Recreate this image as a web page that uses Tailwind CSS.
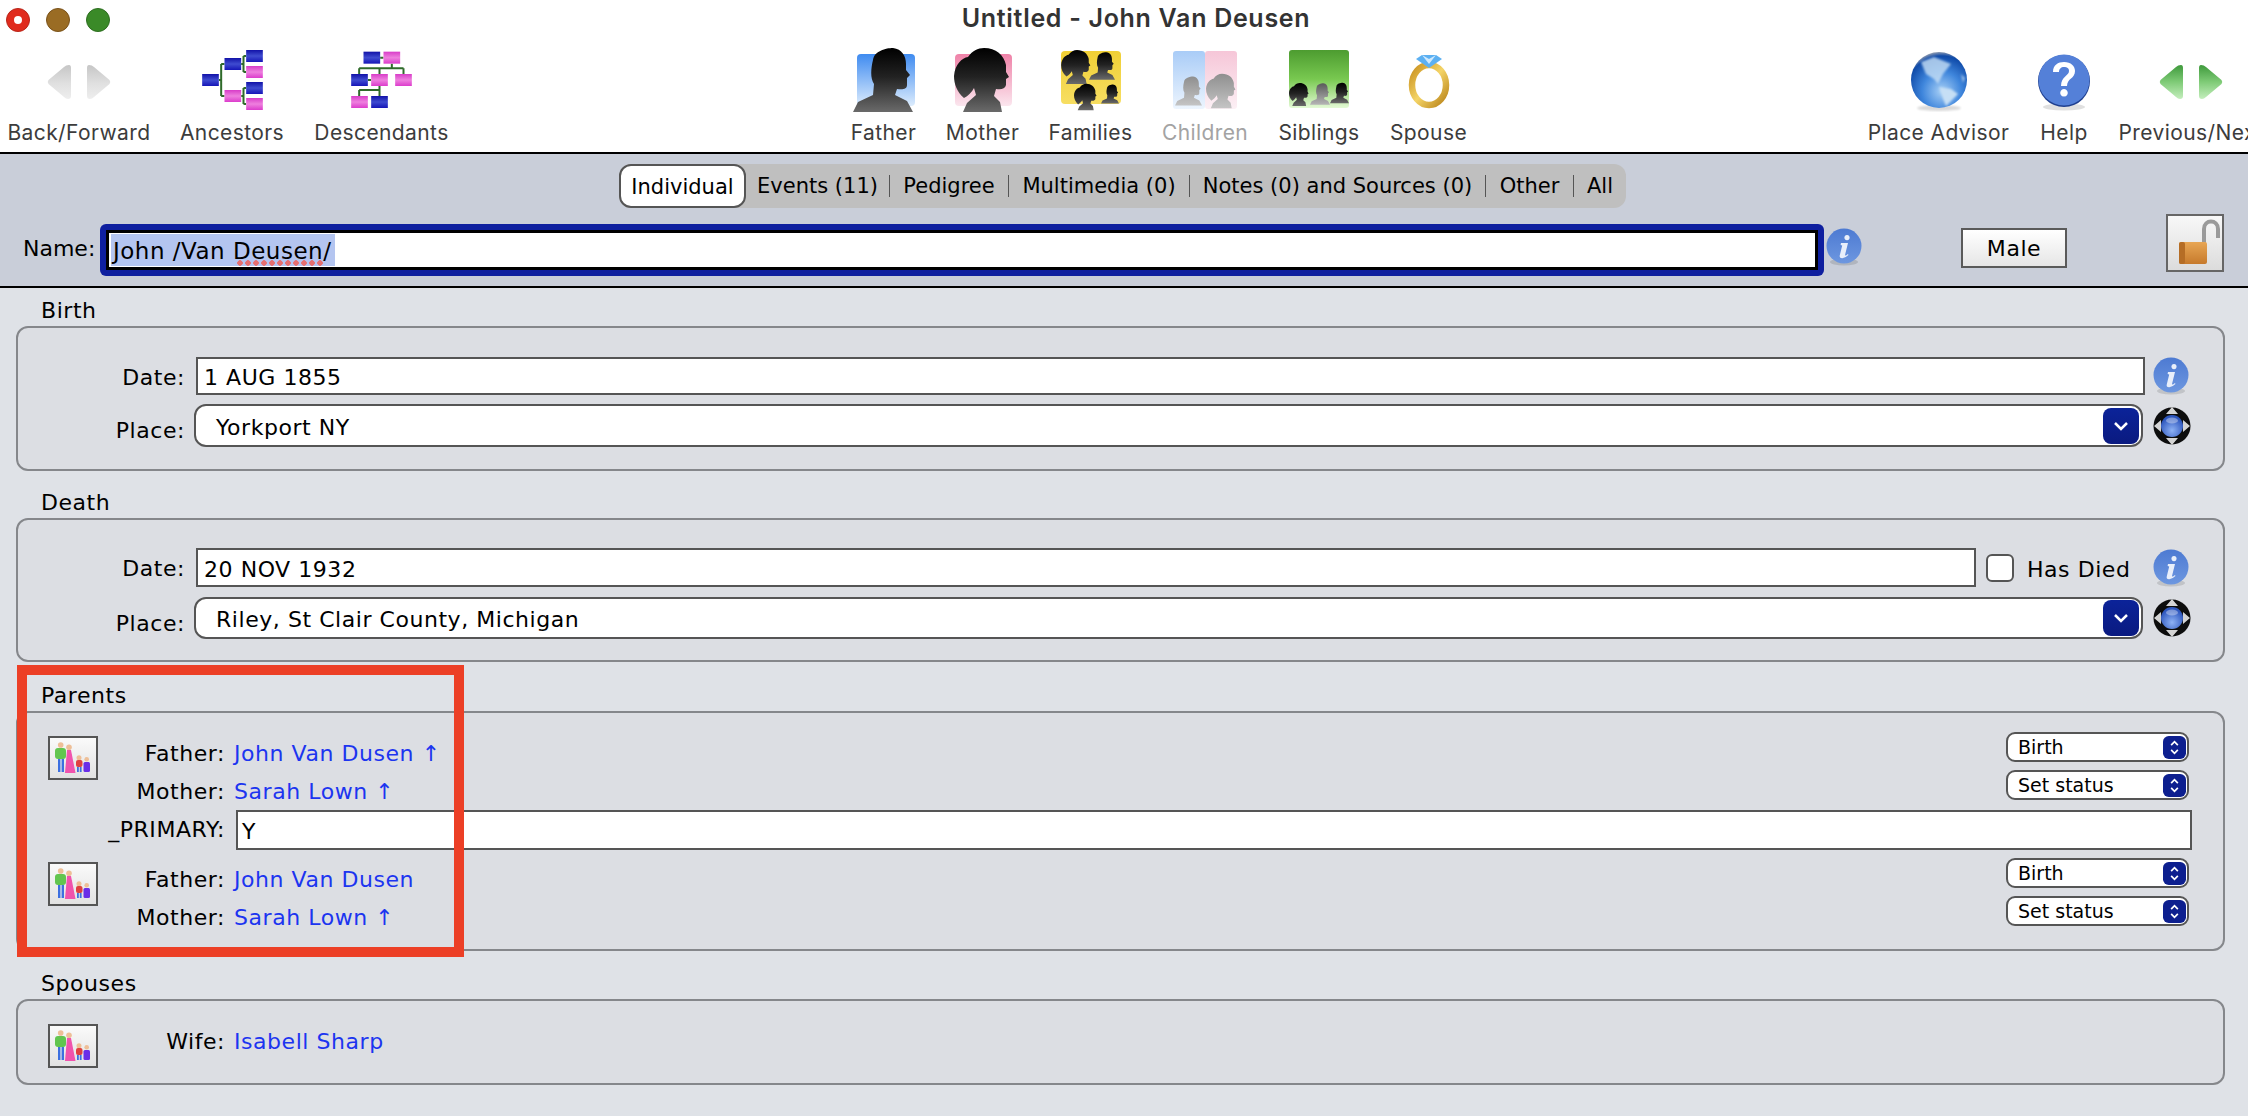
<!DOCTYPE html>
<html lang="en">
<head>
<meta charset="utf-8">
<title>Untitled - John Van Deusen</title>
<script src="https://cdn.jsdelivr.net/npm/@tailwindcss/browser@4"></script>
</head>
<body class="relative w-[2248px] h-[1116px] overflow-hidden bg-[#dfe2e7] font-['DejaVu_Sans',sans-serif] text-[22px] tracking-[0.55px] text-black">
<svg class="absolute w-0 h-0" aria-hidden="true">
  <defs>
    <linearGradient id="sil" x1="0" y1="0" x2="0" y2="1"><stop offset="0" stop-color="#000"/><stop offset="0.45" stop-color="#222"/><stop offset="1" stop-color="#6a6a6a"/></linearGradient>
    <linearGradient id="sil2" x1="0" y1="0" x2="0" y2="1"><stop offset="0" stop-color="#8f8f8f"/><stop offset="1" stop-color="#c4c4c4"/></linearGradient>
    <linearGradient id="sil3" x1="0" y1="0" x2="0" y2="1"><stop offset="0" stop-color="#5a5a5a"/><stop offset="1" stop-color="#b5b5b5"/></linearGradient>
    <linearGradient id="blueb" x1="0" y1="0" x2="0" y2="1"><stop offset="0" stop-color="#3f8bf0"/><stop offset="1" stop-color="#dcecfd"/></linearGradient>
    <linearGradient id="pinkb" x1="0" y1="0" x2="0" y2="1"><stop offset="0" stop-color="#ef82a8"/><stop offset="1" stop-color="#fbe6ee"/></linearGradient>
    <linearGradient id="yelb" x1="0" y1="0" x2="0" y2="1"><stop offset="0" stop-color="#f0cf35"/><stop offset="1" stop-color="#f7de62"/></linearGradient>
    <linearGradient id="greenb" x1="0" y1="0" x2="0" y2="1"><stop offset="0" stop-color="#4d9c30"/><stop offset="0.5" stop-color="#78c850"/><stop offset="1" stop-color="#e4fad6"/></linearGradient>
    <linearGradient id="pblue" x1="0" y1="0" x2="0" y2="1"><stop offset="0" stop-color="#a9ccf7"/><stop offset="1" stop-color="#edf5fe"/></linearGradient>
    <linearGradient id="ppink" x1="0" y1="0" x2="0" y2="1"><stop offset="0" stop-color="#f6c6d8"/><stop offset="1" stop-color="#fcf0f5"/></linearGradient>
    <linearGradient id="arrg" x1="0" y1="0" x2="0" y2="1"><stop offset="0" stop-color="#c6c6c6"/><stop offset="0.55" stop-color="#e0e0e0"/><stop offset="1" stop-color="#eeeeee"/></linearGradient>
    <linearGradient id="arrn" x1="0" y1="0" x2="0" y2="1"><stop offset="0" stop-color="#3f9a3c"/><stop offset="0.5" stop-color="#7fcb77"/><stop offset="1" stop-color="#c4eebd"/></linearGradient>
    <linearGradient id="boxb" x1="0" y1="0" x2="0" y2="1"><stop offset="0" stop-color="#1212a8"/><stop offset="0.5" stop-color="#3f4cd0"/><stop offset="1" stop-color="#1616b8"/></linearGradient>
    <linearGradient id="boxp" x1="0" y1="0" x2="0" y2="1"><stop offset="0" stop-color="#d83cc8"/><stop offset="0.5" stop-color="#ee80de"/><stop offset="1" stop-color="#dc3ccc"/></linearGradient>
    <radialGradient id="globeg" cx="0.55" cy="0.7" r="0.7"><stop offset="0" stop-color="#a8d0f6"/><stop offset="0.5" stop-color="#3f86dc"/><stop offset="0.9" stop-color="#0f4aa8"/><stop offset="1" stop-color="#8a98b0"/></radialGradient>
    <linearGradient id="infog" x1="0" y1="0" x2="0" y2="1"><stop offset="0" stop-color="#4d7ad2"/><stop offset="1" stop-color="#6d97e0"/></linearGradient>
    <radialGradient id="ballg" cx="0.5" cy="0.7" r="0.6"><stop offset="0" stop-color="#8eb2f5"/><stop offset="1" stop-color="#2d56bd"/></radialGradient>
    <linearGradient id="gold" x1="0" y1="0" x2="1" y2="1"><stop offset="0" stop-color="#c8901e"/><stop offset="0.5" stop-color="#f4d467"/><stop offset="1" stop-color="#b98318"/></linearGradient>
    <linearGradient id="lockg" x1="0" y1="0" x2="0" y2="1"><stop offset="0" stop-color="#e8a654"/><stop offset="1" stop-color="#c67a2c"/></linearGradient>
    <filter id="soft"><feGaussianBlur stdDeviation="0.45"/></filter>
    <filter id="soft2"><feGaussianBlur stdDeviation="0.8"/></filter>
    <symbol id="male" viewBox="0 0 60 64"><path d="M20 12C21 3 33 0 40 0C49 1 53 8 53 16L53 22L57 27L54 30L54 37C54 41 50 42 44 41L42 47L54 53L60 64L0 64L5 54L20 47L21 36C17 30 18 20 20 12Z"/></symbol>
    <symbol id="female" viewBox="0 0 56 64"><path d="M30 0C42 0 50 7 52 17L52 24L55 29L52 31L52 37C51 41 47 42 42 41L40 48L46 54L48 64L9 64L13 55L22 47L20 40C18 44 14 48 10 50C3 44 0 36 0 28C1 16 8 10 14 9C18 3 24 0 30 0Z"/></symbol>
    <symbol id="arrow" viewBox="0 0 24 34"><path d="M22 0Q24 0 24 3V31Q24 34 21 34Q19 34 17 32L1.5 19Q0 17 1.5 15L17 2Q19 0 22 0Z"/></symbol>
    <symbol id="info" viewBox="0 0 36 38">
      <ellipse cx="18" cy="34" rx="14" ry="3.5" fill="#000" opacity="0.12"/>
      <circle cx="18" cy="18" r="17.5" fill="url(#infog)"/>
      <path d="M21 7a2.6 2.6 0 1 0 .01 0ZM15 15h7l-3 12q0 1.5 3-1l.4 1q-3.4 3.4-6.4 3.2-3 0-2.2-3l2.4-9.6-1.6-.5Z" fill="#e9effa"/>
    </symbol>
    <symbol id="move" viewBox="0 0 38 40">
      <g filter="url(#soft)">
        <circle cx="19" cy="20" r="18.500" fill="#0b0b0b"/>
        <path d="M19 1l6 7h-12ZM19 39l6-7h-12ZM1 20l7-6v12ZM37 20l-7-6v12Z" fill="#d4d4d4"/>
      </g>
      <circle cx="19" cy="20" r="11" fill="url(#ballg)"/>
      <ellipse cx="19" cy="14.500" rx="6" ry="3" fill="#fff" opacity="0.35"/>
    </symbol>
    <symbol id="family" viewBox="0 0 46 40">
      <g filter="url(#soft)">
        <rect x="5" y="10" width="11" height="11" rx="3" fill="#62c550"/>
        <circle cx="10.700" cy="7" r="2.800" fill="#eebf97"/><rect x="8" y="21" width="2.400" height="13" fill="#3e6fe0"/><rect x="11.600" y="21" width="2.400" height="13" fill="#3e6fe0"/>
        <circle cx="19" cy="9.300" r="2.800" fill="#eebf97"/><path d="M17 12h4l4.500 23H15Z" fill="#f052ad"/>
        <circle cx="29" cy="19.700" r="2.500" fill="#eebf97"/><rect x="26" y="22" width="6.500" height="7" rx="2" fill="#e0403f"/><rect x="27" y="29" width="1.800" height="5" fill="#3e6fe0"/><rect x="29.800" y="29" width="1.800" height="5" fill="#3e6fe0"/>
        <circle cx="36.700" cy="21.300" r="2.300" fill="#eebf97"/><rect x="33.500" y="24" width="6.500" height="10" rx="1.500" fill="#6a2ee8"/>
      </g>
    </symbol>
    <symbol id="updown" viewBox="0 0 24 24"><rect width="24" height="24" rx="6" fill="#0d1f8f"/><path d="M8.5 9.5L12 6l3.5 3.5M8.5 14.500L12 18l3.500-3.500" fill="none" stroke="#fff" stroke-width="1.800"/></symbol>
  </defs>
</svg>

<!-- Title bar and toolbar -->
<header class="h-[154px] bg-white border-b-2 border-black font-['Inter',sans-serif] text-[21px] tracking-[0.4px] text-[#3c3c3c] overflow-hidden">
  <div class="relative h-[48px] flex items-center justify-center">
    <div class="absolute left-[6px] top-[8px] flex gap-[16px]">
      <span class="w-[24px] h-[24px] rounded-full bg-[#e02b1d] border border-[#b8261a] flex items-center justify-center"><span class="w-[8px] h-[8px] rounded-full bg-white"></span></span>
      <span class="w-[24px] h-[24px] rounded-full bg-[#9a6c24] border border-[#7a521a]"></span>
      <span class="w-[24px] h-[24px] rounded-full bg-[#3a8a28] border border-[#2d6e20]"></span>
    </div>
    <h1 class="ml-[24px] -mt-[10px] text-[25px] font-semibold tracking-[0.7px] text-[#333]">Untitled - John Van Deusen</h1>
  </div>
  <div class="flex h-[104px] whitespace-nowrap">
    <div class="w-[851px] shrink-0 flex pl-[8px] gap-[30px]">
      <div class="w-[142px] flex flex-col items-center"><svg class="w-[64px] h-[64px] shrink-0" viewBox="0 0 64 64"><use href="#arrow" x="0" y="17" width="24" height="34" fill="url(#arrg)"/><use href="#arrow" transform="translate(64 0) scale(-1 1)" x="0" y="17" width="24" height="34" fill="url(#arrg)"/></svg><span class="leading-[42px]">Back/Forward</span></div>
      <div class="w-[104px] flex flex-col items-center">
        <svg class="w-[61px] h-[64px] shrink-0" viewBox="608 144 182 192">
          <path d="M658 240H665M665 192V288M665 192H675M665 288H675M725 192H732M732 168V216M732 168H740M732 216H740M725 288H732M732 264V312M732 264H740M732 312H740" stroke="#2f6b2a" stroke-width="6" fill="none"/>
          <rect x="608" y="222" width="50" height="36" fill="url(#boxb)"/><rect x="675" y="174" width="50" height="36" fill="url(#boxb)"/><rect x="675" y="270" width="50" height="36" fill="url(#boxp)"/>
          <rect x="740" y="150" width="50" height="36" fill="url(#boxb)"/><rect x="740" y="198" width="50" height="36" fill="url(#boxp)"/><rect x="740" y="246" width="50" height="36" fill="url(#boxb)"/><rect x="740" y="294" width="50" height="36" fill="url(#boxp)"/>
        </svg><span class="leading-[42px]">Ancestors</span></div>
      <div class="w-[135px] flex flex-col items-center">
        <svg class="w-[61px] h-[64px] shrink-0" viewBox="1058 144 182 192">
          <path d="M1145 173H1155M1180 191V205M1082 205H1215M1082 205V222M1143 205V222M1215 205V222M1108 240H1118M1143 258V288M1082 270H1143M1082 270V288" stroke="#2f6b2a" stroke-width="6" fill="none"/>
          <rect x="1095" y="155" width="50" height="36" fill="url(#boxb)"/><rect x="1155" y="155" width="50" height="36" fill="url(#boxp)"/>
          <rect x="1058" y="222" width="50" height="36" fill="url(#boxb)"/><rect x="1118" y="222" width="50" height="36" fill="url(#boxp)"/><rect x="1190" y="222" width="50" height="36" fill="url(#boxp)"/>
          <rect x="1058" y="288" width="50" height="36" fill="url(#boxp)"/><rect x="1118" y="288" width="50" height="36" fill="url(#boxb)"/>
        </svg><span class="leading-[42px]">Descendants</span></div>
    </div>
    <div class="w-[1017px] shrink-0 flex gap-[30px]">
      <div class="w-[65px] flex flex-col items-center"><svg class="w-[62px] h-[64px] shrink-0" viewBox="0 0 62 64"><rect x="4" y="6" width="58" height="52" rx="4" fill="url(#blueb)"/><use href="#male" width="60" height="64" fill="url(#sil)"/></svg><span class="leading-[42px]">Father</span></div>
      <div class="w-[73px] flex flex-col items-center"><svg class="w-[58px] h-[64px] shrink-0" viewBox="0 0 58 64"><rect x="1" y="6" width="57" height="52" rx="4" fill="url(#pinkb)"/><use href="#female" width="56" height="64" fill="url(#sil)"/></svg><span class="leading-[42px]">Mother</span></div>
      <div class="w-[83px] flex flex-col items-center"><svg class="w-[61px] h-[64px] shrink-0" viewBox="0 0 61 64"><rect x="1" y="3" width="60" height="53" rx="4" fill="url(#yelb)"/><use href="#female" x="0" y="2" width="32" height="34" fill="url(#sil)"/><use href="#male" x="29" y="2" width="26" height="32" fill="url(#sil)"/><use href="#female" x="14" y="34" width="23" height="30" fill="url(#sil)"/><use href="#male" x="41" y="31" width="18" height="30" fill="url(#sil)"/></svg><span class="leading-[42px]">Families</span></div>
      <div class="w-[86px] flex flex-col items-center"><svg class="w-[65px] h-[64px] shrink-0" viewBox="0 0 65 64"><rect x="0" y="3" width="32" height="58" rx="3" fill="url(#pblue)"/><rect x="32" y="3" width="32" height="58" rx="3" fill="url(#ppink)"/><use href="#male" x="2" y="24" width="27" height="38" fill="url(#sil2)"/><use href="#female" x="33" y="24" width="30" height="38" fill="url(#sil2)"/></svg><span class="leading-[42px] text-[#a3a3a3]">Children</span></div>
      <div class="w-[82px] flex flex-col items-center"><svg class="w-[60px] h-[64px] shrink-0" viewBox="0 0 60 64"><rect x="0" y="2" width="60" height="58" rx="3" fill="url(#greenb)"/><use href="#female" x="0" y="31" width="20" height="31" fill="url(#sil)"/><use href="#male" x="21" y="30" width="20" height="32" fill="url(#sil3)"/><use href="#male" x="41" y="28" width="19" height="34" fill="url(#sil)"/></svg><span class="leading-[42px]">Siblings</span></div>
      <div class="w-[77px] flex flex-col items-center"><svg class="w-[44px] h-[64px] shrink-0" viewBox="0 0 44 64"><ellipse cx="22" cy="37" rx="17" ry="20" fill="none" stroke="url(#gold)" stroke-width="6.500"/><path d="M9 11L15 7H29L35 11L22 20Z" fill="#5cb0f2"/><path d="M15 7L22 11L29 7L22 16Z" fill="#cfe9fd"/></svg><span class="leading-[42px]">Spouse</span></div>
    </div>
    <div class="shrink-0 flex gap-[31px]">
      <div class="w-[141px] flex flex-col items-center"><svg class="w-[60px] h-[64px] shrink-0" viewBox="0 0 60 64"><ellipse cx="30" cy="60" rx="22" ry="3" fill="#000" opacity="0.15" filter="url(#soft2)"/><circle cx="30" cy="32" r="28" fill="url(#globeg)"/><g fill="#c6dff5" filter="url(#soft2)"><path d="M12 14L25 9L42 16L34 26L29 36L25 31L17 26Z" opacity="0.8"/><path d="M30 39L42 41L49 46L42 53L37 58L34 51Z"/><path d="M52 26L56 30L54 35Z" opacity="0.7"/></g></svg><span class="leading-[42px]">Place Advisor</span></div>
      <div class="w-[48px] flex flex-col items-center"><svg class="w-[52px] h-[64px] shrink-0" viewBox="0 0 52 64"><ellipse cx="26" cy="59" rx="21" ry="3.500" fill="#000" opacity="0.12"/><circle cx="26" cy="33" r="26" fill="#1f3f8f"/><circle cx="26" cy="32" r="25.500" fill="#5480d8"/><path d="M15 24C15 17 20 14 26 14C33 14 37 18 37 23C37 31 29 30 29 38H23C23 28 31 28 31 23C31 20 29 19 26 19C23 19 21 21 21 24ZM26 41a3.800 3.800 0 1 1 -.01 0Z" fill="#fff"/></svg><span class="leading-[42px]">Help</span></div>
      <div class="w-[144px] flex flex-col items-center"><svg class="w-[64px] h-[64px] shrink-0" viewBox="0 0 64 64"><use href="#arrow" x="0" y="17" width="24" height="34" fill="url(#arrn)"/><use href="#arrow" transform="translate(64 0) scale(-1 1)" x="0" y="17" width="24" height="34" fill="url(#arrn)"/></svg><span class="leading-[42px]">Previous/Next</span></div>
    </div>
  </div>
</header>

<!-- Tabs and name row -->
<section class="h-[134px] bg-[#c9ced9] border-b-2 border-black pt-[10px]">
  <nav class="ml-[619px] w-[1007px] h-[44px] flex items-center bg-[#bfbfbf] rounded-[12px] whitespace-nowrap text-center text-[21px] tracking-normal">
    <span class="w-[127px] h-[44px] leading-[42px] bg-white border-2 border-[#555] rounded-[12px]">Individual</span>
    <span class="w-[143px] pt-[2px]">Events (11)</span><span class="w-px h-[22px] bg-[#555]"></span>
    <span class="w-[118px] pt-[2px]">Pedigree</span><span class="w-px h-[22px] bg-[#555]"></span>
    <span class="w-[180px] pt-[2px]">Multimedia (0)</span><span class="w-px h-[22px] bg-[#555]"></span>
    <span class="w-[295px] pt-[2px]">Notes (0) and Sources (0)</span><span class="w-px h-[22px] bg-[#555]"></span>
    <span class="w-[87px] pt-[2px]">Other</span><span class="w-px h-[22px] bg-[#555]"></span>
    <span class="w-[52px] pt-[2px]">All</span>
  </nav>
  <div class="mt-[16px] h-[52px] flex pl-[23px]">
    <label class="w-[77px] leading-[50px] whitespace-nowrap tracking-normal">Name:</label>
    <div class="w-[1724px] h-[52px] rounded-[6px] bg-[#0e1f9f] p-[6px]">
      <div class="h-[40px] border-[3px] border-black bg-white pl-[2px] flex items-center">
        <span class="relative w-[224px] h-[32px] pl-[2px] bg-[#b4c5f0] text-[23px] tracking-[0.5px] leading-[34px] whitespace-nowrap">John /Van Deusen/<span class="absolute left-[125px] top-[26px] w-[88px] h-[6px] bg-[radial-gradient(circle,#e66f6f_2.500px,transparent_3px)] bg-[length:8px_6px]"></span></span>
      </div>
    </div>
    <svg class="ml-[2px] mt-[4px] w-[36px] h-[38px] shrink-0"><use href="#info"/></svg>
    <button class="ml-[99px] mt-[4px] w-[106px] h-[40px] border-2 border-[#5a5a5a] bg-gradient-to-b from-white to-[#e6e6e6]">Male</button>
    <div class="ml-[99px] -mt-[10px] w-[58px] h-[58px] border-2 border-[#666] bg-gradient-to-b from-[#f8f8f8] to-[#dcdcdc] shrink-0">
      <svg class="w-[54px] h-[54px]" viewBox="0 0 54 54"><path d="M36 28V13C36 3 50 3 50 13V22" fill="none" stroke="#9a9a9a" stroke-width="4"/><rect x="11" y="26" width="28" height="22" rx="2" fill="url(#lockg)"/><rect x="11" y="26" width="6" height="22" rx="2" fill="#b56d25"/></svg>
    </div>
  </div>
</section>

<!-- Form sections -->
<main class="pl-[16px] pr-[23px]">
  <!-- Birth -->
  <h2 class="h-[38px] pl-[25px] pt-[6px] leading-[34px] font-normal">Birth</h2>
  <div class="h-[145px] border-2 border-[#85878b] rounded-[12px] bg-[#dcdee3] pt-[29px] pr-[32px]">
    <div class="flex h-[38px] items-center">
      <label class="w-[167px] pt-[2px] text-right">Date:</label>
      <div class="ml-[11px] flex-1 h-[38px] border-2 border-[#555] bg-white pl-[6px] leading-[38px]">1 AUG 1855</div>
      <svg class="ml-[8px] mr-[2px] w-[36px] h-[38px] shrink-0"><use href="#info"/></svg>
    </div>
    <div class="mt-[9px] flex h-[43px] items-center">
      <label class="w-[167px] pt-[10px] text-right">Place:</label>
      <div class="ml-[9px] flex-1 h-[43px] border-2 border-[#555] rounded-[12px] bg-white pl-[20px] pr-[2px] flex items-center justify-between">
        <span class="pt-[3px]">Yorkport NY</span>
        <span class="w-[36px] h-[36px] rounded-[8px] bg-gradient-to-b from-[#0b2399] to-[#0a1a80] flex items-center justify-center"><svg class="w-[16px] h-[10px]" viewBox="0 0 16 10"><path d="M2 2L8 8L14 2" fill="none" stroke="#fff" stroke-width="2.500"/></svg></span>
      </div>
      <svg class="ml-[10px] w-[38px] h-[40px] shrink-0"><use href="#move"/></svg>
    </div>
  </div>

  <!-- Death -->
  <h2 class="mt-[9px] h-[38px] pl-[25px] pt-[6px] leading-[34px] font-normal">Death</h2>
  <div class="h-[144px] border-2 border-[#85878b] rounded-[12px] bg-[#dcdee3] pt-[28px] pr-[32px]">
    <div class="flex h-[39px] items-center">
      <label class="w-[167px] pt-[2px] text-right">Date:</label>
      <div class="ml-[11px] flex-1 h-[39px] border-2 border-[#555] bg-white pl-[6px] leading-[39px]">20 NOV 1932</div>
      <span class="ml-[10px] w-[28px] h-[28px] rounded-[6px] border-2 border-[#555] bg-white shrink-0"></span>
      <span class="ml-[13px] w-[102px] pt-[3px] whitespace-nowrap shrink-0">Has Died</span>
      <svg class="ml-[24px] mr-[2px] w-[36px] h-[38px] shrink-0"><use href="#info"/></svg>
    </div>
    <div class="mt-[10px] flex h-[42px] items-center">
      <label class="w-[167px] pt-[10px] text-right">Place:</label>
      <div class="ml-[9px] flex-1 h-[42px] border-2 border-[#555] rounded-[12px] bg-white pl-[20px] pr-[2px] flex items-center justify-between">
        <span class="pt-[3px]">Riley, St Clair County, Michigan</span>
        <span class="w-[36px] h-[36px] rounded-[8px] bg-gradient-to-b from-[#0b2399] to-[#0a1a80] flex items-center justify-center"><svg class="w-[16px] h-[10px]" viewBox="0 0 16 10"><path d="M2 2L8 8L14 2" fill="none" stroke="#fff" stroke-width="2.500"/></svg></span>
      </div>
      <svg class="ml-[10px] w-[38px] h-[40px] shrink-0"><use href="#move"/></svg>
    </div>
  </div>

  <!-- Parents -->
  <h2 class="mt-[11px] h-[38px] pl-[25px] pt-[6px] leading-[34px] font-normal">Parents</h2>
  <div class="h-[240px] border-2 border-[#85878b] rounded-[12px] bg-[#dcdee3] pt-[19px]">
    <div class="flex items-start pl-[30px] pr-[34px]">
      <div class="mt-[4px] w-[50px] h-[44px] border-2 border-[#555] bg-gradient-to-b from-[#fafafa] to-[#e2e2e2] shrink-0"><svg class="w-[46px] h-[40px]"><use href="#family"/></svg></div>
      <div class="flex-1">
        <div class="flex h-[38px] items-start">
          <label class="w-[127px] text-right leading-[44px]">Father:</label>
          <a class="ml-[9px] text-[#1c35f0] leading-[44px] whitespace-nowrap">John Van Dusen ↑</a>
          <div class="ml-auto w-[183px] h-[30px] border-2 border-[#555] rounded-[9px] bg-white pl-[10px] pr-[1px] flex items-center justify-between text-[19px] tracking-normal"><span>Birth</span><svg class="w-[23px] h-[23px]"><use href="#updown"/></svg></div>
        </div>
        <div class="flex h-[38px] items-start">
          <label class="w-[127px] text-right leading-[44px]">Mother:</label>
          <a class="ml-[9px] text-[#1c35f0] leading-[44px] whitespace-nowrap">Sarah Lown ↑</a>
          <div class="ml-auto w-[183px] h-[30px] border-2 border-[#555] rounded-[9px] bg-white pl-[10px] pr-[1px] flex items-center justify-between text-[19px] tracking-normal"><span>Set status</span><svg class="w-[23px] h-[23px]"><use href="#updown"/></svg></div>
        </div>
      </div>
    </div>
    <div class="mt-[2px] flex h-[40px] pl-[80px] pr-[31px]">
      <label class="w-[127px] text-right leading-[40px] whitespace-nowrap">_PRIMARY:</label>
      <div class="ml-[11px] flex-1 h-[40px] border-2 border-[#555] bg-white pl-[4px] leading-[40px]">Y</div>
    </div>
    <div class="mt-[8px] flex items-start pl-[30px] pr-[34px]">
      <div class="mt-[4px] w-[50px] h-[44px] border-2 border-[#555] bg-gradient-to-b from-[#fafafa] to-[#e2e2e2] shrink-0"><svg class="w-[46px] h-[40px]"><use href="#family"/></svg></div>
      <div class="flex-1">
        <div class="flex h-[38px] items-start">
          <label class="w-[127px] text-right leading-[44px]">Father:</label>
          <a class="ml-[9px] text-[#1c35f0] leading-[44px] whitespace-nowrap">John Van Dusen</a>
          <div class="ml-auto w-[183px] h-[30px] border-2 border-[#555] rounded-[9px] bg-white pl-[10px] pr-[1px] flex items-center justify-between text-[19px] tracking-normal"><span>Birth</span><svg class="w-[23px] h-[23px]"><use href="#updown"/></svg></div>
        </div>
        <div class="flex h-[38px] items-start">
          <label class="w-[127px] text-right leading-[44px]">Mother:</label>
          <a class="ml-[9px] text-[#1c35f0] leading-[44px] whitespace-nowrap">Sarah Lown ↑</a>
          <div class="ml-auto w-[183px] h-[30px] border-2 border-[#555] rounded-[9px] bg-white pl-[10px] pr-[1px] flex items-center justify-between text-[19px] tracking-normal"><span>Set status</span><svg class="w-[23px] h-[23px]"><use href="#updown"/></svg></div>
        </div>
      </div>
    </div>
  </div>

  <!-- Spouses -->
  <h2 class="mt-[10px] h-[38px] pl-[25px] pt-[6px] leading-[34px] font-normal">Spouses</h2>
  <div class="h-[86px] border-2 border-[#85878b] rounded-[12px] bg-[#dcdee3] pt-[22px] pl-[30px] flex items-start">
    <div class="mt-[1px] w-[50px] h-[44px] border-2 border-[#555] bg-gradient-to-b from-[#fafafa] to-[#e2e2e2] shrink-0"><svg class="w-[46px] h-[40px]"><use href="#family"/></svg></div>
    <label class="w-[127px] text-right leading-[38px]">Wife:</label>
    <a class="ml-[9px] text-[#1c35f0] leading-[38px] whitespace-nowrap">Isabell Sharp</a>
  </div>
</main>

<!-- Red annotation rectangle -->
<div class="absolute left-[17px] top-[665px] w-[447px] h-[292px] border-[10px] border-[#ec3f26]"></div>
</body>
</html>
